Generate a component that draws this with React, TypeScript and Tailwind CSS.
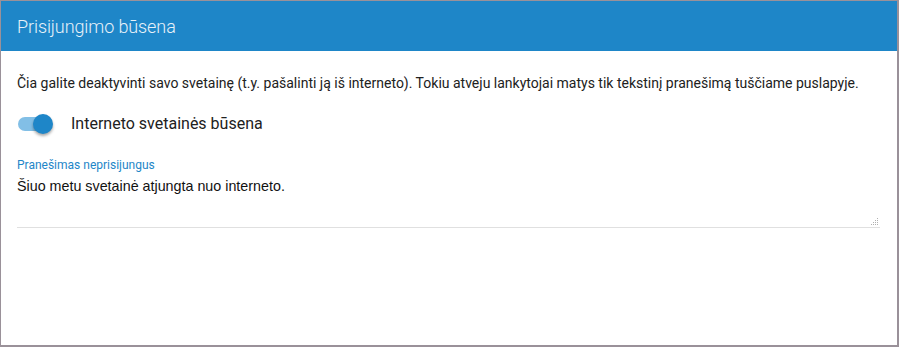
import React from "react";

export default function App() {
  return (
    <div className="w-[899px] h-[347px] bg-white border-t border-l border-r-2 border-b-2 border-[#9a9199] flex flex-col" style={{ fontFamily: "Roboto, 'Liberation Sans', sans-serif" }}>
      <div className="h-[50px] bg-[#1e86c8] flex items-center px-4 shrink-0">
        <span className="text-[18px] font-light text-[#e6f1f9] tracking-[-0.1px]">Prisijungimo būsena</span>
      </div>
      <div className="flex flex-col px-4 pt-[20px]">
        <p className="text-[14px] leading-[24px] text-[#212121]">
          Čia galite deaktyvinti savo svetainę (t.y. pašalinti ją iš interneto). Tokiu atveju lankytojai matys tik tekstinį pranešimą tuščiame puslapyje.
        </p>
        <div className="flex items-center mt-[17px] h-[24px]">
          <div className="relative w-[36px] h-[20px] ml-[1px] flex items-center">
            <div className="w-[34px] h-[14px] rounded-full bg-[#82bfe6]" />
            <div className="absolute left-[15px] top-0 w-[20px] h-[20px] rounded-full bg-[#1e86c8] shadow-[0_2px_3px_rgba(0,0,0,0.35)]" />
          </div>
          <span className="ml-[17px] text-[16px] text-[#212121]">Interneto svetainės būsena</span>
        </div>
        <div className="mt-[21px] w-[863px] relative border-b border-[#e0e0e0]">
          <div className="text-[12px] leading-[16px] text-[#1e86c8]">Pranešimas neprisijungus</div>
          <div className="mt-[3px] text-[14.3px] leading-[20px] text-[#111] h-[51px]" style={{ fontFamily: "'Liberation Sans', Arial, sans-serif" }}>
            Šiuo metu svetainė atjungta nuo interneto.
          </div>
          <svg className="absolute right-[1px] bottom-[1px]" width="8" height="8" viewBox="0 0 8 8">
            <g fill="#b0b0b0">
              <rect x="6" y="0" width="1" height="1" />
              <rect x="4" y="2" width="1" height="1" />
              <rect x="6" y="2" width="1" height="1" />
              <rect x="2" y="4" width="1" height="1" />
              <rect x="4" y="4" width="1" height="1" />
              <rect x="6" y="4" width="1" height="1" />
              <rect x="0" y="6" width="1" height="1" />
              <rect x="2" y="6" width="1" height="1" />
              <rect x="4" y="6" width="1" height="1" />
              <rect x="6" y="6" width="1" height="1" />
            </g>
          </svg>
        </div>
      </div>
    </div>
  );
}
